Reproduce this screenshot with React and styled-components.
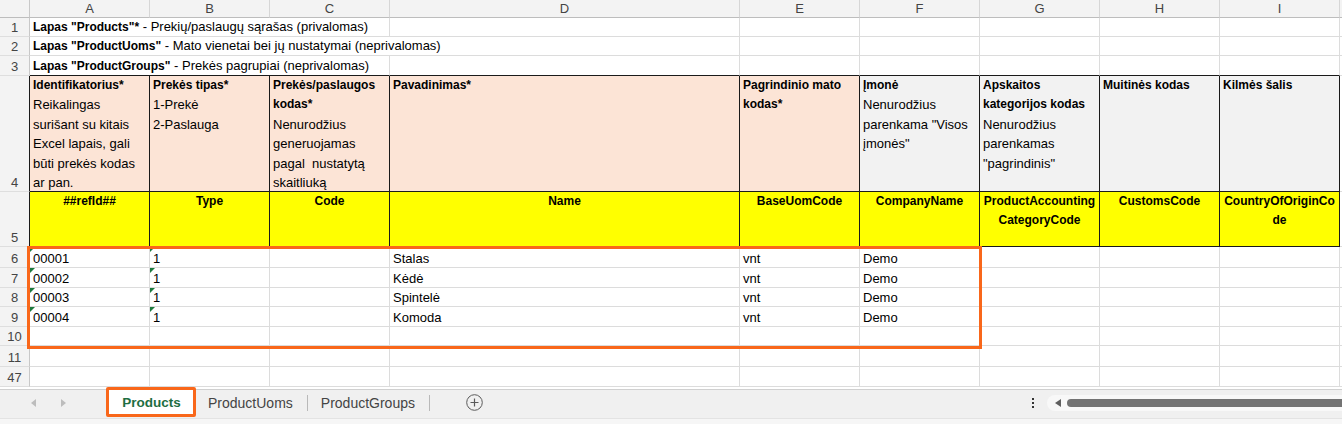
import React from 'react';
import styled, { createGlobalStyle, css } from 'styled-components';

const Global = createGlobalStyle`
  html, body { margin: 0; padding: 0; background: #fff; overflow: hidden; }
  body { font-family: "Liberation Sans", Arial, sans-serif; color: #000; }
`;

const ORANGE = '#f9671a';
const GRID = '#dcdcdc';
const DARK = '#1a1a1a';

const Page = styled.div`
  width: 1342px;
  height: 424px;
  display: flex;
  flex-direction: column;
  overflow: hidden;
`;

const Sheet = styled.div`
  position: relative;
  flex: none;
  height: 389px;
  overflow: hidden;
  display: grid;
  grid-template-columns: 30px 120px 120px 120px 350px 120px 120px 120px 120px 120px 120px;
  grid-template-rows: 18px 19px 19px 20px 116px 55px 21px 19.5px 19.5px 19.5px 19.5px 20.5px 20px;
  align-content: start;
`;

const Corner = styled.div`
  background: #f3f3f3;
  border-right: 1px solid #c8c8c8;
  border-bottom: 1px solid #bdbdbd;
  box-sizing: border-box;
`;

const ColHead = styled.div`
  box-sizing: border-box;
  background: #f3f3f3;
  border-right: 1px solid #d6d6d6;
  border-bottom: 1px solid #bdbdbd;
  display: flex;
  align-items: center;
  justify-content: center;
  font-size: 13px;
  color: #444;
`;

const RowHead = styled.div`
  box-sizing: border-box;
  background: #f3f3f3;
  border-right: 1px solid ${p => (p.$dark ? DARK : '#c8c8c8')};
  border-bottom: 1px solid #dedede;
  display: flex;
  align-items: flex-end;
  justify-content: center;
  padding-bottom: 1px;
  font-size: 13px;
  line-height: 15px;
  color: #444;
`;

const tones = {
  plain: '#ffffff',
  peach: '#fce4d6',
  gray: '#f2f2f2',
  yellow: '#ffff00',
};

const Cell = styled.div`
  position: relative;
  box-sizing: border-box;
  grid-column: ${p => (p.$span ? `span ${p.$span}` : 'auto')};
  background: ${p => tones[p.$tone || 'plain']};
  border-right: 1px solid ${p => (p.$strong ? DARK : GRID)};
  border-bottom: 1px solid ${p => (p.$strong || p.$edge ? DARK : GRID)};
  padding: 0 3px;
  overflow: hidden;
  white-space: pre;
  font-size: 13px;
  display: flex;
  flex-direction: column;
  align-items: ${p => (p.$center ? 'center' : 'flex-start')};
  justify-content: ${p => (p.$top ? 'flex-start' : 'flex-end')};
  line-height: ${p => (p.$top ? '19.4px' : '15px')};
  ${p => !p.$top && css`padding-bottom: 1px;`}
  ${p =>
    p.$flag &&
    css`
      &::before {
        content: '';
        position: absolute;
        top: 0;
        left: 0;
        border-top: 5px solid #1d7a3e;
        border-right: 5px solid transparent;
      }
    `}
`;

const Line = styled.div`
  font-size: ${p => (p.$bold ? '12px' : '13px')};
  font-weight: ${p => (p.$bold ? 700 : 400)};
  white-space: pre;
`;

const Bold = styled.span`
  font-weight: 700;
  font-size: 12px;
`;

const Selection = styled.div`
  position: absolute;
  top: 246px;
  left: 27px;
  width: 955px;
  height: 103px;
  box-sizing: border-box;
  border: 3px solid ${ORANGE};
  pointer-events: none;
`;

const TabBar = styled.div`
  flex: none;
  height: 29px;
  box-sizing: border-box;
  display: flex;
  align-items: stretch;
  background: #f0f0f0;
  border-top: 1px solid #d0d0d0;
  padding-bottom: 3px;
`;

const Nav = styled.div`
  width: 109px;
  flex: none;
  display: flex;
  align-items: center;
  gap: 25px;
  padding-left: 31px;
  box-sizing: border-box;
`;

const ActiveTab = styled.div`
  position: relative;
  width: 86px;
  flex: none;
  box-sizing: border-box;
  background: #fff;
  border-right: 1px solid #c9c9c9;
  border-bottom: 1px solid #c9c9c9;
  display: flex;
  align-items: center;
  justify-content: center;
  font-size: 13.5px;
  font-weight: 700;
  color: #1e6e42;
`;

const TabMark = styled.div`
  position: absolute;
  top: -3px;
  left: -3px;
  right: -2px;
  bottom: -3px;
  border: 3px solid ${ORANGE};
  border-radius: 2px;
  pointer-events: none;
`;

const Tab = styled.div`
  padding: 0 14px 0 13px;
  display: flex;
  align-items: center;
  font-size: 14px;
  color: #444;
`;

const Sep = styled.div`
  width: 1px;
  background: #b9b9b9;
  margin: 5px 0 4px;
`;

const PlusBtn = styled.div`
  margin-left: 36px;
  display: flex;
  align-items: center;
`;

const Spacer = styled.div`
  flex: 1;
`;

const Dots = styled.div`
  width: 16px;
  display: flex;
  flex-direction: column;
  align-items: center;
  justify-content: center;
  gap: 2px;
  margin-right: 6px;
  & > i {
    width: 2px;
    height: 2px;
    background: #333;
    display: block;
  }
`;

const Track = styled.div`
  width: 295px;
  flex: none;
  align-self: center;
  height: 16px;
  background: #f8f8f8;
  border-radius: 8px 0 0 8px;
  display: flex;
  align-items: center;
  padding-left: 8px;
  gap: 6px;
  box-sizing: border-box;
`;

const Thumb = styled.div`
  flex: 1;
  height: 8px;
  background: #737373;
  border-radius: 4px 0 0 4px;
`;

const Strip = styled.div`
  flex: 1;
  background: #f6f6f6;
  border-top: 1px solid #e3e3e3;
`;

const letters = ['A', 'B', 'C', 'D', 'E', 'F', 'G', 'H', 'I', ''];

const row4 = [
  { tone: 'peach', bold: ['Identifikatorius*'], reg: ['Reikalingas', 'surišant su kitais', 'Excel lapais, gali', 'būti prekės kodas', 'ar pan.'] },
  { tone: 'peach', bold: ['Prekės tipas*'], reg: ['1-Prekė', '2-Paslauga'] },
  { tone: 'peach', bold: ['Prekės/paslaugos', 'kodas*'], reg: ['Nenurodžius', 'generuojamas', 'pagal  nustatytą', 'skaitliuką'] },
  { tone: 'peach', bold: ['Pavadinimas*'], reg: [] },
  { tone: 'peach', bold: ['Pagrindinio mato', 'kodas*'], reg: [] },
  { tone: 'gray', bold: ['Įmonė'], reg: ['Nenurodžius', 'parenkama "Visos', 'įmonės"'] },
  { tone: 'gray', bold: ['Apskaitos', 'kategorijos kodas'], reg: ['Nenurodžius', 'parenkamas', '"pagrindinis"'] },
  { tone: 'gray', bold: ['Muitinės kodas'], reg: [] },
  { tone: 'gray', bold: ['Kilmės šalis'], reg: [] },
];

const row5 = [
  ['##refId##'],
  ['Type'],
  ['Code'],
  ['Name'],
  ['BaseUomCode'],
  ['CompanyName'],
  ['ProductAccounting', 'CategoryCode'],
  ['CustomsCode'],
  ['CountryOfOriginCo', 'de'],
];

const data = [
  ['00001', '1', '', 'Stalas', 'vnt', 'Demo'],
  ['00002', '1', '', 'Kėdė', 'vnt', 'Demo'],
  ['00003', '1', '', 'Spintelė', 'vnt', 'Demo'],
  ['00004', '1', '', 'Komoda', 'vnt', 'Demo'],
];

const intro = [
  { n: 1, b: 'Lapas "Products"*', r: ' - Prekių/paslaugų sąrašas (privalomas)', span: 3 },
  { n: 2, b: 'Lapas "ProductUoms"', r: ' - Mato vienetai bei jų nustatymai (neprivalomas)', span: 4 },
  { n: 3, b: 'Lapas "ProductGroups"', r: ' - Prekės pagrupiai (neprivalomas)', span: 3 },
];

function IntroRow({ n, b, r, span }) {
  const rest = 10 - span;
  const edge = n === 3;
  return (
    <>
      <RowHead>{n}</RowHead>
      <Cell $span={span} $edge={edge}>
        <div>
          <Bold>{b}</Bold>
          {r}
        </div>
      </Cell>
      {Array.from({ length: rest }).map((_, i) => (
        <Cell key={i} $edge={edge && span + i < 9} />
      ))}
    </>
  );
}

function EmptyRow({ n }) {
  return (
    <>
      <RowHead>{n}</RowHead>
      {letters.map((_, i) => (
        <Cell key={i} />
      ))}
    </>
  );
}

export default function App() {
  return (
    <Page>
      <Global />
      <Sheet>
        <Corner />
        {letters.map((l, i) => (
          <ColHead key={i}>{l}</ColHead>
        ))}

        {intro.map(r => (
          <IntroRow key={r.n} {...r} />
        ))}

        <RowHead $dark>4</RowHead>
        {row4.map((c, i) => (
          <Cell key={i} $tone={c.tone} $strong $top>
            {c.bold.map((t, j) => (
              <Line key={'b' + j} $bold>
                {t}
              </Line>
            ))}
            {c.reg.map((t, j) => (
              <Line key={'r' + j}>{t}</Line>
            ))}
          </Cell>
        ))}
        <Cell />

        <RowHead $dark>5</RowHead>
        {row5.map((lines, i) => (
          <Cell key={i} $tone="yellow" $strong $top $center>
            {lines.map((t, j) => (
              <Line key={j} $bold>
                {t}
              </Line>
            ))}
          </Cell>
        ))}
        <Cell />

        {data.map((row, ri) => (
          <React.Fragment key={ri}>
            <RowHead>{ri + 6}</RowHead>
            {letters.map((_, ci) => (
              <Cell key={ci} $flag={ci < 2}>
                {row[ci] || ''}
              </Cell>
            ))}
          </React.Fragment>
        ))}

        <EmptyRow n={10} />
        <EmptyRow n={11} />
        <EmptyRow n={47} />

        <Selection />
      </Sheet>

      <TabBar>
        <Nav>
          <svg width="5" height="8" viewBox="0 0 5 8">
            <path d="M5 0 L0 4 L5 8 Z" fill="#bdbdbd" />
          </svg>
          <svg width="5" height="8" viewBox="0 0 5 8">
            <path d="M0 0 L5 4 L0 8 Z" fill="#bdbdbd" />
          </svg>
        </Nav>
        <ActiveTab>
          Products
          <TabMark />
        </ActiveTab>
        <Tab>ProductUoms</Tab>
        <Sep />
        <Tab>ProductGroups</Tab>
        <Sep />
        <PlusBtn>
          <svg width="17" height="17" viewBox="0 0 17 17">
            <circle cx="8.5" cy="8.5" r="7.8" fill="none" stroke="#5a5a5a" strokeWidth="1" />
            <path d="M8.5 4.5 V12.5 M4.5 8.5 H12.5" stroke="#5a5a5a" strokeWidth="1.2" />
          </svg>
        </PlusBtn>
        <Spacer />
        <Dots>
          <i />
          <i />
          <i />
        </Dots>
        <Track>
          <svg width="6" height="8" viewBox="0 0 6 8">
            <path d="M6 0 L0 4 L6 8 Z" fill="#5f5f5f" />
          </svg>
          <Thumb />
        </Track>
      </TabBar>
      <Strip />
    </Page>
  );
}
